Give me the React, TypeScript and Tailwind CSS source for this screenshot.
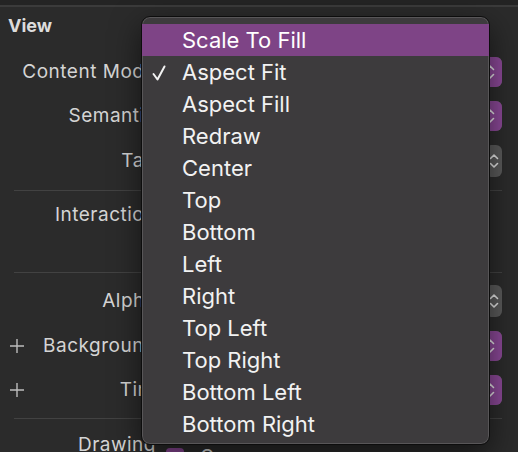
const MENU_ITEMS = [
  'Scale To Fill',
  'Aspect Fit',
  'Aspect Fill',
  'Redraw',
  'Center',
  'Top',
  'Bottom',
  'Left',
  'Right',
  'Top Left',
  'Top Right',
  'Bottom Left',
  'Bottom Right',
]

function Chevrons({ className = '' }: { className?: string }) {
  return (
    <svg className={className} width="12" height="20" viewBox="0 0 12 20" fill="none" stroke="#e6e6e6" strokeWidth="1.6" strokeLinecap="round" strokeLinejoin="round">
      <path d="M2.5 7.5 6 4l3.5 3.5" />
      <path d="M2.5 12.5 6 16l3.5-3.5" />
    </svg>
  )
}

function Plus() {
  return (
    <svg className="absolute left-[10px] top-1/2 -translate-y-1/2" width="14" height="14" viewBox="0 0 14 14" stroke="#bdbdbd" strokeWidth="1.4">
      <path d="M7 0v14M0 7h14" />
    </svg>
  )
}

function PopupButton() {
  return (
    <div className="flex h-[30px] justify-end overflow-hidden rounded-[6px] bg-[#5a5a5a]">
      <div className="flex w-[24px] items-center justify-center bg-[#8a4896]">
        <Chevrons />
      </div>
    </div>
  )
}

function Stepper() {
  return (
    <div className="flex h-[32px] justify-end">
      <div className="flex w-[17px] items-center justify-center rounded-[6px] bg-[#5a5a5a]">
        <Chevrons />
      </div>
    </div>
  )
}

type RowProps = {
  label: string
  plus?: boolean
  className?: string
  children?: React.ReactNode
}

function Row({ label, plus, className = '', children }: RowProps) {
  return (
    <div className={`flex items-center ${className}`}>
      <div className="relative w-[156px] shrink-0 whitespace-nowrap text-right tracking-[0.5px]">
        {plus && <Plus />}
        {label}
      </div>
      <div className="ml-[8px] mr-[16px] flex-1">{children}</div>
    </div>
  )
}

function Separator({ className = '' }: { className?: string }) {
  return <div className={`ml-[14px] mr-[16px] h-px bg-[#424242] ${className}`} />
}

export default function App() {
  return (
    <div className="relative h-[452px] w-[518px] overflow-hidden bg-[#2b2b2b] font-['Inter',sans-serif] text-[19px] leading-[22px] text-[#d4d4d4]">
      <div className="h-[5px] bg-[#242424]" />
      <div className="h-[2px] bg-[#3b3b3b]" />

      <div className="mt-[3px] flex h-[32px] items-center pl-[8px] text-[18px] font-bold text-[#dcdcdc]">View</div>

      <Row label="Content Mode" className="mt-[15px] h-[30px]">
        <PopupButton />
      </Row>
      <Row label="Semantic" className="mt-[14px] h-[30px]">
        <PopupButton />
      </Row>
      <Row label="Tag" className="mt-[14px] h-[32px]">
        <Stepper />
      </Row>

      <Separator className="mt-[13px]" />

      <Row label="Interaction" className="mt-[9px] h-[30px]" />
      <div className="mt-[6px] h-[30px]" />

      <Separator className="mt-[6px]" />

      <Row label="Alpha" className="mt-[12px] h-[32px]">
        <Stepper />
      </Row>
      <Row label="Background" plus className="mt-[13px] h-[32px]">
        <PopupButton />
      </Row>
      <Row label="Tint" plus className="mt-[12px] h-[32px]">
        <PopupButton />
      </Row>

      <Separator className="mt-[12px]" />

      <div className="mt-[10px] flex h-[32px] items-start">
        <div className="w-[156px] shrink-0 pt-[5px] text-right tracking-[0.5px]">Drawing</div>
        <div className="ml-[10px] mt-[19px] h-[18px] w-[18px] rounded-[4px] bg-[#8a4896]" />
        <div className="ml-[16px] pt-[17px]">Opaque</div>
      </div>

      <div className="absolute left-[141px] top-[16px] w-[349px] rounded-[9px] border border-[#0d0d0d] bg-[#3d3b3d] pb-[4px] pt-[7px] text-[22px] leading-[32px] text-[#f2f2f2] shadow-[inset_0_0_0_1px_rgba(255,255,255,0.14),0_10px_30px_rgba(0,0,0,0.55)]">
        {MENU_ITEMS.map((item, i) => (
          <div
            key={item}
            className={`relative h-[32px] whitespace-nowrap pl-[40px] ${i === 0 ? 'bg-[#7e4486] text-white' : ''}`}
          >
            {i === 1 && (
              <svg className="absolute left-[10px] top-[9px]" width="14" height="16" viewBox="0 0 14 16" fill="none" stroke="#f2f2f2" strokeWidth="2" strokeLinecap="round" strokeLinejoin="round">
                <path d="M1.5 9 5.5 14.5 12.5 1.5" />
              </svg>
            )}
            {item}
          </div>
        ))}
      </div>
    </div>
  )
}
